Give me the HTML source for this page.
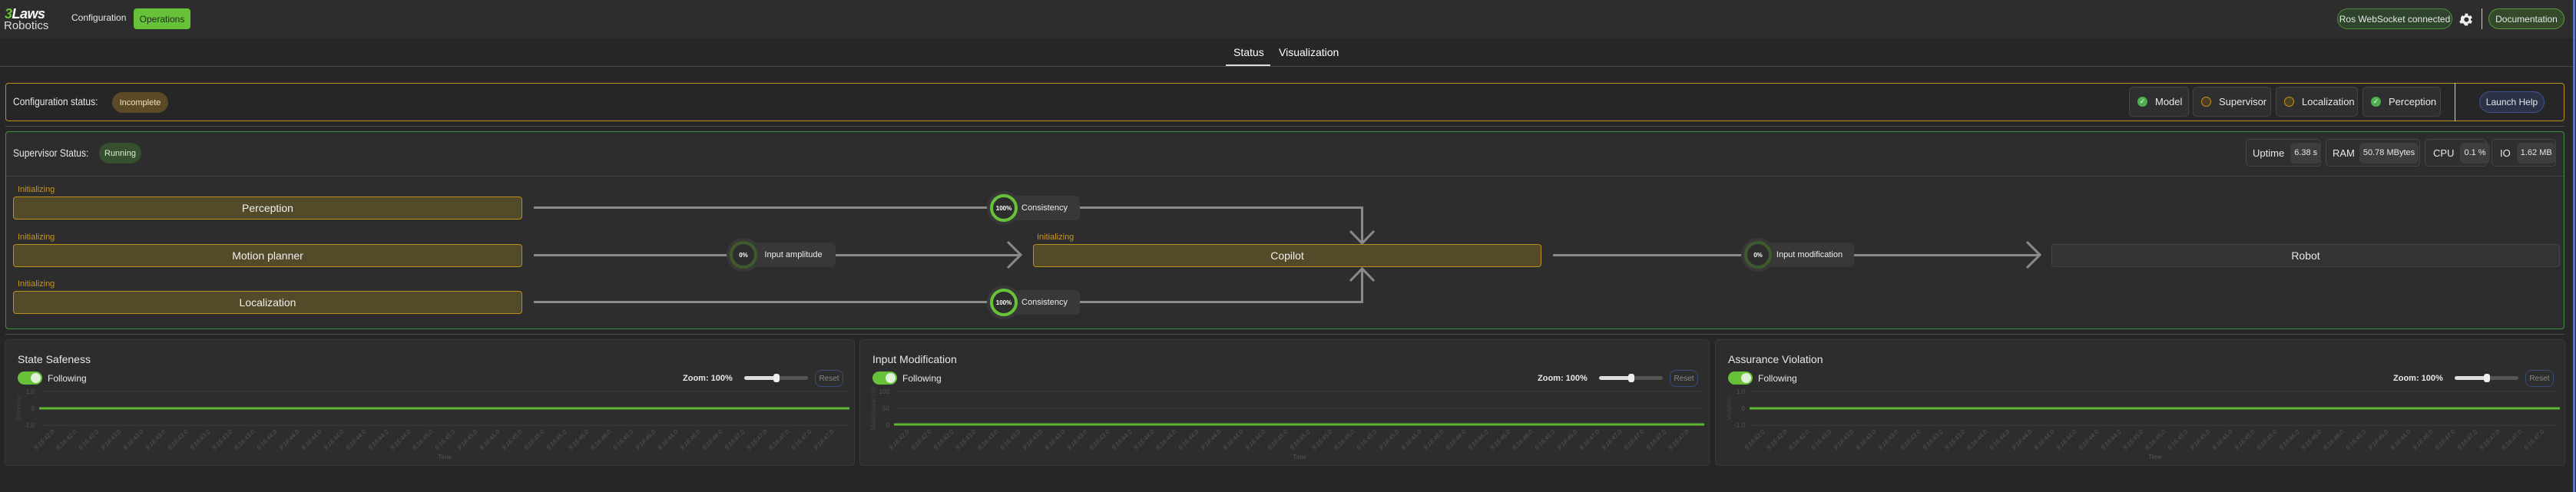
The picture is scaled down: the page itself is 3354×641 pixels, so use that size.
<!DOCTYPE html>
<html><head><meta charset="utf-8"><style>
*{box-sizing:border-box;margin:0;padding:0}
body{width:3354px;height:641px;background:#262626;position:relative;overflow:hidden;font-family:"Liberation Sans",sans-serif;color:#e8e8e8;white-space:nowrap}
.a{position:absolute}
.c{display:flex;align-items:center;justify-content:center}
.pill{border-radius:14px;font-size:12px}
.sb{border:1px solid #444;border-radius:5px;background:#2f2f2f;font-size:13px;display:flex;align-items:center;padding-left:10px;gap:10px}
.box{background:#524a28;border:1px solid #b8901a;border-radius:4px;font-size:14px;color:#f0f0f0}
.init{font-size:11px;color:#c8961e}
.line{background:#8a8a8a;height:3px}
.gauge{width:44px;height:44px;border-radius:50%;background:#383838}
.ring{width:36px;height:36px;border-radius:50%;border:4px solid #67c23a;background:#2d2d2d;font-size:8px;font-weight:bold;color:#fff}
.lbl{background:#383838;border-radius:6px;height:32px;font-size:11px;color:#eee}
.panel{background:#2d2d2d;border:1px solid #3a3a3a;border-radius:5px}
.v{background:#3d3d3d;border-radius:6px;height:27px;padding:0 5px;font-size:11px;display:flex;align-items:center}
.n{transform:scaleX(.86);transform-origin:left center}
</style></head><body>
<!-- header -->
<div class="a" style="left:0;top:0;width:3354px;height:50px;background:#2d2d2d"></div>
<div class="a" style="left:6px;top:8px;font-weight:bold;font-style:italic;font-size:18px;color:#fff;letter-spacing:-0.5px"><span style="color:#67c23a">3</span>Laws</div>
<div class="a" style="left:5px;top:25px;font-size:15px;color:#ddd">Robotics</div>
<div class="a" style="left:93px;top:16px;font-size:12px">Configuration</div>
<div class="a c" style="left:174px;top:11px;width:74px;height:27px;border-radius:4px;background:#67c23a;color:#1e2a18;font-size:12px">Operations</div>
<div class="a c pill" style="left:3043px;top:11px;width:150px;height:27px;background:#2e452c;border:1px solid #4f8a3a">Ros WebSocket connected</div>
<svg class="a" style="left:3200px;top:15px" width="21" height="21" viewBox="0 0 24 24"><path fill="#eee" d="M19.4 13a7.5 7.5 0 0 0 0-2l2.1-1.6-2-3.5-2.5 1a7.6 7.6 0 0 0-1.7-1L15 3h-4l-.4 2.9a7.6 7.6 0 0 0-1.7 1l-2.5-1-2 3.5L4.6 11a7.5 7.5 0 0 0 0 2l-2.1 1.6 2 3.5 2.5-1a7.6 7.6 0 0 0 1.7 1L11 21h4l.4-2.9a7.6 7.6 0 0 0 1.7-1l2.5 1 2-3.5zM13 15.5a3.5 3.5 0 1 1 0-7 3.5 3.5 0 0 1 0 7z"/></svg>
<div class="a" style="left:3231px;top:11px;width:1px;height:27px;background:#ccc"></div>
<div class="a c pill" style="left:3240px;top:11px;width:99px;height:27px;background:#344a2a;border:1px solid #5a9a3a">Documentation</div>
<div class="a" style="left:3350px;top:0;width:3px;height:641px;background:#5a78b8"></div>
<!-- tabs -->
<div class="a" style="left:1606px;top:60px;font-size:14px;color:#fff">Status</div>
<div class="a" style="left:1665px;top:60px;font-size:14px;color:#fff">Visualization</div>
<div class="a" style="left:0;top:86px;width:3350px;height:1px;background:#4a4a4a"></div>
<div class="a" style="left:1596px;top:84px;width:58px;height:2px;background:#ddd"></div>
<!-- config panel -->
<div class="a" style="left:7px;top:108px;width:3332px;height:50px;border:1px solid #b8901a;border-radius:4px"></div>
<div class="a n" style="left:17px;top:124px;font-size:14px">Configuration status:</div>
<div class="a c" style="left:146px;top:120px;width:73px;height:27px;border-radius:14px;background:#5a4a25;color:#f3e4b8;font-size:11px">Incomplete</div>
<div class="a sb" style="left:2772px;top:113px;width:78px;height:39px"><span style="width:13px;height:13px;border-radius:50%;background:#4caf50;color:#fff;font-size:9px" class="c">✓</span>Model</div>
<div class="a sb" style="left:2855px;top:113px;width:102px;height:39px"><span style="width:13px;height:13px;border-radius:50%;border:1.5px solid #c8961e;background:#4a3f20"></span>Supervisor</div>
<div class="a sb" style="left:2963px;top:113px;width:107px;height:39px"><span style="width:13px;height:13px;border-radius:50%;border:1.5px solid #c8961e;background:#4a3f20"></span>Localization</div>
<div class="a sb" style="left:3076px;top:113px;width:102px;height:39px"><span style="width:13px;height:13px;border-radius:50%;background:#4caf50;color:#fff;font-size:9px" class="c">✓</span>Perception</div>
<div class="a" style="left:3196px;top:108px;width:1px;height:50px;background:#ccc"></div>
<div class="a c pill" style="left:3228px;top:119px;width:85px;height:28px;background:#2b3247;border:1px solid #3f5290">Launch Help</div>
<div class="a" style="left:7px;top:164px;width:3332px;height:1px;background:#4a4a4a"></div>
<!-- supervisor panel -->
<div class="a" style="left:7px;top:171px;width:3332px;height:258px;border:1px solid #3f8a3f;border-radius:4px;background:#2d2d2d"></div>
<div class="a n" style="left:17px;top:191px;font-size:14px">Supervisor Status:</div>
<div class="a c" style="left:129px;top:186px;width:55px;height:27px;border-radius:14px;background:#36502f;color:#d8ecd0;font-size:11px">Running</div>
<div class="a" style="left:8px;top:229px;width:3330px;height:1px;background:#444"></div>
<div class="a sb" style="left:2924px;top:181px;width:98px;height:36px;padding-left:8px;gap:8px">Uptime<span class="v">6.38 s</span></div>
<div class="a sb" style="left:3028px;top:181px;width:123px;height:36px;padding-left:8px;gap:6px">RAM<span class="v">50.78 MBytes</span></div>
<div class="a sb" style="left:3157px;top:181px;width:81px;height:36px;padding-left:10px;gap:8px">CPU<span class="v">0.1 %</span></div>
<div class="a sb" style="left:3244px;top:181px;width:84px;height:36px;padding-left:10px;gap:8px">IO<span class="v">1.62 MB</span></div>
<!-- diagram -->
<div class="a init" style="left:23px;top:241px">Initializing</div>
<div class="a box c" style="left:17px;top:256px;width:663px;height:30px">Perception</div>
<div class="a init" style="left:23px;top:303px">Initializing</div>
<div class="a box c" style="left:17px;top:318px;width:663px;height:30px">Motion planner</div>
<div class="a init" style="left:23px;top:364px">Initializing</div>
<div class="a box c" style="left:17px;top:379px;width:663px;height:30px">Localization</div>
<div class="a line" style="left:695px;top:269px;width:1080px"></div>
<div class="a line" style="left:695px;top:331px;width:633px"></div>
<div class="a line" style="left:695px;top:392px;width:1080px"></div>
<div class="a" style="left:1772px;top:269px;width:3px;height:48px;background:#8a8a8a"></div>
<div class="a" style="left:1772px;top:349px;width:3px;height:46px;background:#8a8a8a"></div>
<div class="a line" style="left:2022px;top:331px;width:635px"></div>
<svg class="a" style="left:0;top:0" width="3354" height="641"><g fill="none" stroke="#8a8a8a" stroke-width="3"><path d="M1312 315 L1329 332 L1312 349"/><path d="M1758 301 L1773.5 317 L1789 301"/><path d="M1758 366 L1773.5 350 L1789 366"/><path d="M2639 315 L2656 332 L2639 349"/></g></svg>
<div class="a init" style="left:1350px;top:303px">Initializing</div>
<div class="a box c" style="left:1345px;top:318px;width:662px;height:30px">Copilot</div>
<div class="a c" style="left:2671px;top:318px;width:662px;height:30px;background:#333;border:1px solid #444;border-radius:4px;font-size:14px">Robot</div>
<!-- gauges -->
<div class="a lbl c" style="left:1300px;top:255px;width:106px;padding-left:14px">Consistency</div>
<div class="a gauge c" style="left:1285px;top:249px"><div class="ring c">100%</div></div>
<div class="a lbl c" style="left:1300px;top:378px;width:106px;padding-left:14px">Consistency</div>
<div class="a gauge c" style="left:1285px;top:372px"><div class="ring c">100%</div></div>
<div class="a lbl c" style="left:960px;top:316px;width:128px;padding-left:18px">Input amplitude</div>
<div class="a gauge c" style="left:946px;top:310px"><div class="ring c" style="border-color:#3d5a2e">0%</div></div>
<div class="a lbl c" style="left:2280px;top:316px;width:134px;padding-left:18px">Input modification</div>
<div class="a gauge c" style="left:2267px;top:310px"><div class="ring c" style="border-color:#3d5a2e">0%</div></div>
<div class="a" style="left:7px;top:435px;width:3332px;height:1px;background:#4a4a4a"></div>
<!-- charts -->
<div class="a panel" style="left:6px;top:442px;width:1107px;height:165px">
<div class="a" style="left:16px;top:17px;font-size:14px">State Safeness</div>
<div class="a" style="left:16px;top:41px;width:32px;height:17px;border-radius:9px;background:#67c23a"><div class="a" style="right:2px;top:2px;width:13px;height:13px;border-radius:50%;background:#e0f0d8"></div></div>
<div class="a" style="left:55px;top:43px;font-size:12px">Following</div>
<div class="a" style="left:882px;top:44px;font-size:11px;font-weight:bold">Zoom: 100%</div>
<div class="a" style="left:962px;top:47px;width:83px;height:5px;border-radius:3px;background:linear-gradient(90deg,#ddd 50%,#555 50%)"></div>
<div class="a" style="left:1000px;top:44px;width:8px;height:11px;border-radius:3px;background:#eee"></div>
<div class="a c" style="left:1054px;top:39px;width:37px;height:22px;border:1px solid #3a4a7a;border-radius:8px;font-size:10px;color:#888">Reset</div>
<svg class="a" style="left:0;top:0" width="1107" height="165" font-family="Liberation Sans" font-size="8" fill="#555">
<g stroke="#363636"><path d="M44 67H1099M44 111H1099"/></g>
<text x="38" y="70" text-anchor="end">1.0</text><text x="38" y="92" text-anchor="end">0</text><text x="38" y="114" text-anchor="end">-1.0</text>
<text transform="translate(20 89) rotate(-90)" text-anchor="middle" fill="#444">Safeness</text>
<line x1="44" y1="89" x2="1099" y2="89" stroke="#5cb82e" stroke-width="3"/>
<text x="572" y="155" text-anchor="middle">Time</text>
<g font-style="italic" text-anchor="end">
<text transform="translate(64 120) rotate(-45)">9:16:42.0</text><text transform="translate(93 120) rotate(-45)">9:16:42.0</text><text transform="translate(122 120) rotate(-45)">9:16:42.0</text><text transform="translate(151 120) rotate(-45)">9:16:43.0</text><text transform="translate(180 120) rotate(-45)">9:16:43.0</text><text transform="translate(209 120) rotate(-45)">9:16:43.0</text><text transform="translate(238 120) rotate(-45)">9:16:43.0</text><text transform="translate(267 120) rotate(-45)">9:16:43.0</text><text transform="translate(296 120) rotate(-45)">9:16:43.0</text><text transform="translate(325 120) rotate(-45)">9:16:43.0</text><text transform="translate(354 120) rotate(-45)">9:16:44.0</text><text transform="translate(383 120) rotate(-45)">9:16:44.0</text><text transform="translate(412 120) rotate(-45)">9:16:44.0</text><text transform="translate(441 120) rotate(-45)">9:16:44.0</text><text transform="translate(470 120) rotate(-45)">9:16:44.0</text><text transform="translate(499 120) rotate(-45)">9:16:44.0</text><text transform="translate(528 120) rotate(-45)">9:16:44.0</text><text transform="translate(557 120) rotate(-45)">9:16:45.0</text><text transform="translate(586 120) rotate(-45)">9:16:45.0</text><text transform="translate(615 120) rotate(-45)">9:16:45.0</text><text transform="translate(644 120) rotate(-45)">9:16:45.0</text><text transform="translate(673 120) rotate(-45)">9:16:45.0</text><text transform="translate(702 120) rotate(-45)">9:16:45.0</text><text transform="translate(731 120) rotate(-45)">9:16:45.0</text><text transform="translate(760 120) rotate(-45)">9:16:46.0</text><text transform="translate(789 120) rotate(-45)">9:16:46.0</text><text transform="translate(818 120) rotate(-45)">9:16:46.0</text><text transform="translate(847 120) rotate(-45)">9:16:46.0</text><text transform="translate(876 120) rotate(-45)">9:16:46.0</text><text transform="translate(905 120) rotate(-45)">9:16:46.0</text><text transform="translate(934 120) rotate(-45)">9:16:46.0</text><text transform="translate(963 120) rotate(-45)">9:16:47.0</text><text transform="translate(992 120) rotate(-45)">9:16:47.0</text><text transform="translate(1021 120) rotate(-45)">9:16:47.0</text><text transform="translate(1050 120) rotate(-45)">9:16:47.0</text><text transform="translate(1079 120) rotate(-45)">9:16:47.0</text>
</g></svg>
</div>
<div class="a panel" style="left:1119px;top:442px;width:1107px;height:165px">
<div class="a" style="left:16px;top:17px;font-size:14px">Input Modification</div>
<div class="a" style="left:16px;top:41px;width:32px;height:17px;border-radius:9px;background:#67c23a"><div class="a" style="right:2px;top:2px;width:13px;height:13px;border-radius:50%;background:#e0f0d8"></div></div>
<div class="a" style="left:55px;top:43px;font-size:12px">Following</div>
<div class="a" style="left:882px;top:44px;font-size:11px;font-weight:bold">Zoom: 100%</div>
<div class="a" style="left:962px;top:47px;width:83px;height:5px;border-radius:3px;background:linear-gradient(90deg,#ddd 50%,#555 50%)"></div>
<div class="a" style="left:1000px;top:44px;width:8px;height:11px;border-radius:3px;background:#eee"></div>
<div class="a c" style="left:1054px;top:39px;width:37px;height:22px;border:1px solid #3a4a7a;border-radius:8px;font-size:10px;color:#888">Reset</div>
<svg class="a" style="left:0;top:0" width="1107" height="165" font-family="Liberation Sans" font-size="8" fill="#555">
<g stroke="#363636"><path d="M44 67H1099M44 89H1099"/></g>
<text x="38" y="70" text-anchor="end">100</text><text x="38" y="92" text-anchor="end">50</text><text x="38" y="114" text-anchor="end">0</text>
<text transform="translate(20 89) rotate(-90)" text-anchor="middle" fill="#444">Modification (%)</text>
<line x1="44" y1="110" x2="1099" y2="110" stroke="#5cb82e" stroke-width="3"/>
<text x="572" y="155" text-anchor="middle">Time</text>
<g font-style="italic" text-anchor="end">
<text transform="translate(64 120) rotate(-45)">9:16:42.0</text><text transform="translate(93 120) rotate(-45)">9:16:42.0</text><text transform="translate(122 120) rotate(-45)">9:16:42.0</text><text transform="translate(151 120) rotate(-45)">9:16:43.0</text><text transform="translate(180 120) rotate(-45)">9:16:43.0</text><text transform="translate(209 120) rotate(-45)">9:16:43.0</text><text transform="translate(238 120) rotate(-45)">9:16:43.0</text><text transform="translate(267 120) rotate(-45)">9:16:43.0</text><text transform="translate(296 120) rotate(-45)">9:16:43.0</text><text transform="translate(325 120) rotate(-45)">9:16:43.0</text><text transform="translate(354 120) rotate(-45)">9:16:44.0</text><text transform="translate(383 120) rotate(-45)">9:16:44.0</text><text transform="translate(412 120) rotate(-45)">9:16:44.0</text><text transform="translate(441 120) rotate(-45)">9:16:44.0</text><text transform="translate(470 120) rotate(-45)">9:16:44.0</text><text transform="translate(499 120) rotate(-45)">9:16:44.0</text><text transform="translate(528 120) rotate(-45)">9:16:44.0</text><text transform="translate(557 120) rotate(-45)">9:16:45.0</text><text transform="translate(586 120) rotate(-45)">9:16:45.0</text><text transform="translate(615 120) rotate(-45)">9:16:45.0</text><text transform="translate(644 120) rotate(-45)">9:16:45.0</text><text transform="translate(673 120) rotate(-45)">9:16:45.0</text><text transform="translate(702 120) rotate(-45)">9:16:45.0</text><text transform="translate(731 120) rotate(-45)">9:16:45.0</text><text transform="translate(760 120) rotate(-45)">9:16:46.0</text><text transform="translate(789 120) rotate(-45)">9:16:46.0</text><text transform="translate(818 120) rotate(-45)">9:16:46.0</text><text transform="translate(847 120) rotate(-45)">9:16:46.0</text><text transform="translate(876 120) rotate(-45)">9:16:46.0</text><text transform="translate(905 120) rotate(-45)">9:16:46.0</text><text transform="translate(934 120) rotate(-45)">9:16:46.0</text><text transform="translate(963 120) rotate(-45)">9:16:47.0</text><text transform="translate(992 120) rotate(-45)">9:16:47.0</text><text transform="translate(1021 120) rotate(-45)">9:16:47.0</text><text transform="translate(1050 120) rotate(-45)">9:16:47.0</text><text transform="translate(1079 120) rotate(-45)">9:16:47.0</text>
</g></svg>
</div>
<div class="a panel" style="left:2233px;top:442px;width:1107px;height:165px">
<div class="a" style="left:16px;top:17px;font-size:14px">Assurance Violation</div>
<div class="a" style="left:16px;top:41px;width:32px;height:17px;border-radius:9px;background:#67c23a"><div class="a" style="right:2px;top:2px;width:13px;height:13px;border-radius:50%;background:#e0f0d8"></div></div>
<div class="a" style="left:55px;top:43px;font-size:12px">Following</div>
<div class="a" style="left:882px;top:44px;font-size:11px;font-weight:bold">Zoom: 100%</div>
<div class="a" style="left:962px;top:47px;width:83px;height:5px;border-radius:3px;background:linear-gradient(90deg,#ddd 50%,#555 50%)"></div>
<div class="a" style="left:1000px;top:44px;width:8px;height:11px;border-radius:3px;background:#eee"></div>
<div class="a c" style="left:1054px;top:39px;width:37px;height:22px;border:1px solid #3a4a7a;border-radius:8px;font-size:10px;color:#888">Reset</div>
<svg class="a" style="left:0;top:0" width="1107" height="165" font-family="Liberation Sans" font-size="8" fill="#555">
<g stroke="#363636"><path d="M44 67H1099M44 111H1099"/></g>
<text x="38" y="70" text-anchor="end">1.0</text><text x="38" y="92" text-anchor="end">0</text><text x="38" y="114" text-anchor="end">-1.0</text>
<text transform="translate(20 89) rotate(-90)" text-anchor="middle" fill="#444">Violation</text>
<line x1="44" y1="89" x2="1099" y2="89" stroke="#5cb82e" stroke-width="3"/>
<text x="572" y="155" text-anchor="middle">Time</text>
<g font-style="italic" text-anchor="end">
<text transform="translate(64 120) rotate(-45)">9:16:42.0</text><text transform="translate(93 120) rotate(-45)">9:16:42.0</text><text transform="translate(122 120) rotate(-45)">9:16:42.0</text><text transform="translate(151 120) rotate(-45)">9:16:43.0</text><text transform="translate(180 120) rotate(-45)">9:16:43.0</text><text transform="translate(209 120) rotate(-45)">9:16:43.0</text><text transform="translate(238 120) rotate(-45)">9:16:43.0</text><text transform="translate(267 120) rotate(-45)">9:16:43.0</text><text transform="translate(296 120) rotate(-45)">9:16:43.0</text><text transform="translate(325 120) rotate(-45)">9:16:43.0</text><text transform="translate(354 120) rotate(-45)">9:16:44.0</text><text transform="translate(383 120) rotate(-45)">9:16:44.0</text><text transform="translate(412 120) rotate(-45)">9:16:44.0</text><text transform="translate(441 120) rotate(-45)">9:16:44.0</text><text transform="translate(470 120) rotate(-45)">9:16:44.0</text><text transform="translate(499 120) rotate(-45)">9:16:44.0</text><text transform="translate(528 120) rotate(-45)">9:16:44.0</text><text transform="translate(557 120) rotate(-45)">9:16:45.0</text><text transform="translate(586 120) rotate(-45)">9:16:45.0</text><text transform="translate(615 120) rotate(-45)">9:16:45.0</text><text transform="translate(644 120) rotate(-45)">9:16:45.0</text><text transform="translate(673 120) rotate(-45)">9:16:45.0</text><text transform="translate(702 120) rotate(-45)">9:16:45.0</text><text transform="translate(731 120) rotate(-45)">9:16:45.0</text><text transform="translate(760 120) rotate(-45)">9:16:46.0</text><text transform="translate(789 120) rotate(-45)">9:16:46.0</text><text transform="translate(818 120) rotate(-45)">9:16:46.0</text><text transform="translate(847 120) rotate(-45)">9:16:46.0</text><text transform="translate(876 120) rotate(-45)">9:16:46.0</text><text transform="translate(905 120) rotate(-45)">9:16:46.0</text><text transform="translate(934 120) rotate(-45)">9:16:46.0</text><text transform="translate(963 120) rotate(-45)">9:16:47.0</text><text transform="translate(992 120) rotate(-45)">9:16:47.0</text><text transform="translate(1021 120) rotate(-45)">9:16:47.0</text><text transform="translate(1050 120) rotate(-45)">9:16:47.0</text><text transform="translate(1079 120) rotate(-45)">9:16:47.0</text>
</g></svg>
</div>
</body></html>
